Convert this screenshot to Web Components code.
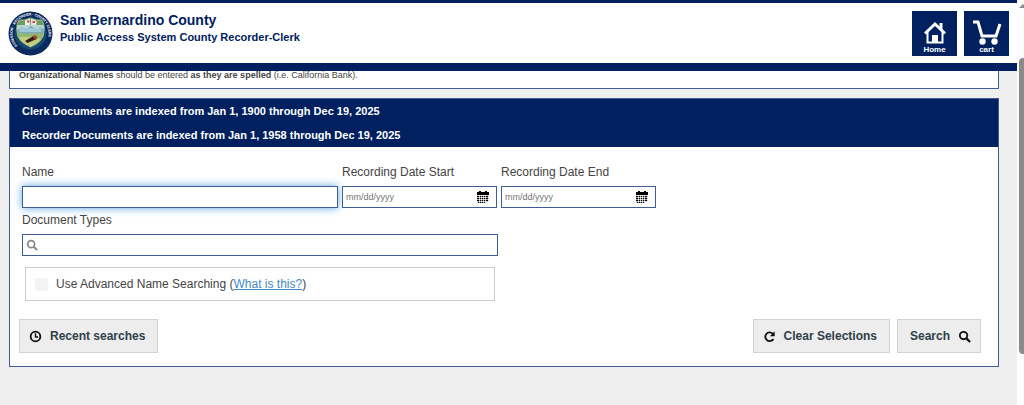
<!DOCTYPE html>
<html lang="en">
<head>
<meta charset="utf-8">
<meta name="viewport" content="width=device-width, initial-scale=1">
<title>San Bernardino County Recorder-Clerk</title>
<style>
  :root {
    --navy: #002060;
    --line: #405c97;
    --grey: #efefef;
    --text: #444;
  }
  body {
    margin: 0;
    font-family: "Liberation Sans", Arial, sans-serif;
    font-size: 12px;
    color: var(--text);
    background: var(--grey);
  }
</style>
</head>
<body>
<record-app></record-app>

<script type="module">
  // Shared helper: open shadow root filled with the element's markup.
  class BaseElement extends HTMLElement {
    constructor() {
      super();
      this.attachShadow({ mode: 'open' });
    }
    connectedCallback() {
      this.shadowRoot.innerHTML = this.render();
    }
  }

  const magnifier = `<circle cx="6" cy="6" r="4" fill="none" stroke="currentColor" stroke-width="2"/>
    <path d="M9 9l4 4" stroke="currentColor" stroke-width="2.4"/>`;

  const icons = {
    clock: `<circle cx="7" cy="7" r="5.2" fill="none" stroke="currentColor" stroke-width="2"/>
      <path d="M7 3.5V7.5H9.8" fill="none" stroke="currentColor" stroke-width="1.5"/>`,
    refresh: `<path d="M11.2 9.6A4.7 4.7 0 1 1 10.6 4" fill="none" stroke="currentColor" stroke-width="2"/>
      <path d="M12.6 1.4V6.6H7.4Z" fill="currentColor"/>`,
    search: magnifier
  };

  class CountySeal extends BaseElement {
    render() {
      return `
        <style>
          :host { display: block; flex: none; }
          svg { display: block; width: 45px; height: 45px; }
          text { font-size: 7px; font-weight: bold; fill: #fff; }
        </style>
        <svg viewBox="0 0 90 90" role="img" aria-label="County seal">
          <defs>
            <path id="ring" d="M19 70A36 36 0 1 1 71 70"/>
            <clipPath id="shield"><path d="M23 18Q34 20 45 14Q56 20 67 18Q74 25 72 42Q71 61 45 72Q19 61 18 42Q16 25 23 18Z"/></clipPath>
          </defs>
          <circle cx="45" cy="45" r="44" fill="#0b2a60"/>
          <circle cx="45" cy="45" r="32" fill="#164a72"/>
          <g clip-path="url(#shield)">
            <rect x="15" y="12" width="60" height="62" fill="#b9d7d2"/>
            <rect x="15" y="12" width="60" height="16" fill="#6d9c62"/>
            <rect x="34" y="16" width="10" height="12" fill="#f4eeee"/>
            <rect x="46" y="16" width="11" height="12" fill="#eddede"/>
            <path d="M38 19h5v4h-5zM49 20h5v4h-5z" fill="#b9544c"/>
            <path d="M15 41L27 32L35 37L46 30L56 37L65 32L76 42V48H15Z" fill="#7fa7b6"/>
            <path d="M23 34H67V42H23Z" fill="#9dc8d8"/>
            <path d="M15 45H75V58H15Z" fill="#8fb870"/>
            <path d="M15 54Q34 47 75 58V75H15Z" fill="#c2cf81"/>
            <path d="M34 60L51 50L57 56L39 64Z" fill="#321d18"/>
            <path d="M49 50L56 48L59 55L55 58Z" fill="#a34231"/>
          </g>
          <path d="M23 18Q34 20 45 14Q56 20 67 18Q74 25 72 42Q71 61 45 72Q19 61 18 42Q16 25 23 18Z" fill="none" stroke="#9bbd72" stroke-width="2"/>
          <text><textPath href="#ring">ASSESSOR · RECORDER · COUNTY CLERK</textPath></text>
        </svg>
      `;
    }
  }

  class NavTile extends BaseElement {
    render() {
      return `
        <style>
          :host { display: block; }
          a {
            display: flex;
            flex-direction: column;
            align-items: center;
            justify-content: flex-end;
            box-sizing: border-box;
            width: 45px;
            height: 45px;
            padding-bottom: 1px;
            background: var(--navy);
            color: #fff;
            font-size: 8px;
            font-weight: bold;
            line-height: 10px;
            text-decoration: none;
          }
        </style>
        <a href="#"><slot name="icon"></slot><span><slot></slot></span></a>
      `;
    }
  }

  class SiteHeader extends BaseElement {
    render() {
      return `
        <style>
          :host { display: block; position: relative; z-index: 1; }
          header {
            display: flex;
            align-items: center;
            gap: 7px;
            box-sizing: border-box;
            min-height: 71px;
            padding: 0 8px;
            border-top: 3px solid var(--navy);
            border-bottom: 8px solid var(--navy);
            background: #fff;
            color: var(--navy);
          }
          .titles { flex: 1; padding-bottom: 10px; }
          h1, p { margin: 0; font-weight: bold; }
          h1 { font-size: 14px; line-height: 18px; }
          p { font-size: 11px; line-height: 16px; }
          svg { display: block; }
        </style>
        <header>
          <county-seal></county-seal>
          <div class="titles">
            <h1>San Bernardino County</h1>
            <p>Public Access System County Recorder-Clerk</p>
          </div>
          <nav-tile>
            <svg slot="icon" width="24" height="24" viewBox="0 0 24 24" fill="none" stroke="#fff" stroke-width="2">
              <path d="M2 12.5L12 3L22 12.5" stroke-width="3"/>
              <path d="M4.5 11V21.5H19.5V11"/>
              <path d="M16.5 2H19.5V9L16.5 6Z" fill="#fff" stroke="none"/>
              <path d="M9 22V14H15V22Z" fill="#fff" stroke="none"/>
            </svg>
            Home
          </nav-tile>
          <nav-tile>
            <svg slot="icon" width="30" height="26" viewBox="0 0 30 26" fill="none" stroke="#fff" stroke-width="3">
              <path d="M1 3H6L10 17H24L28 5"/>
              <circle cx="10.5" cy="22.5" r="3.2" fill="#fff" stroke="none"/>
              <circle cx="22.5" cy="22.5" r="3.2" fill="#fff" stroke="none"/>
            </svg>
            cart
          </nav-tile>
        </header>
      `;
    }
  }

  // Help text; its top edge is scrolled under the header.
  class NoticeBox extends BaseElement {
    render() {
      return `
        <style>
          :host {
            display: block;
            margin: -8px 18px 9px 9px;
            padding: 5px 9px 7px;
            border: 1px solid var(--line);
            background: #fff;
            font-size: 9px;
            line-height: 12px;
          }
        </style>
        <slot></slot>
      `;
    }
  }

  class TextField extends BaseElement {
    render() {
      const icon = this.getAttribute('icon');
      return `
        <style>
          :host { display: block; }
          label { display: block; line-height: 16px; margin-bottom: 6px; }
          .box {
            display: flex;
            align-items: center;
            box-sizing: border-box;
            height: 22px;
            padding: 0 3px;
            border: 1px solid var(--line);
            background: #fff;
          }
          :host([active]) .box { box-shadow: 0 0 8px #5ba5e3; }
          input {
            flex: 1;
            min-width: 0;
            padding: 0;
            border: 0;
            outline: 0;
            background: none;
            font: inherit;
            font-size: 9px;
          }
          input::placeholder { color: #757575; }
          svg { display: block; color: #888; }
          button { padding: 0 4px; border: 0; background: none; }
          button svg { color: #000; }
        </style>
        <label for="field">${this.getAttribute('label')}</label>
        <div class="box">
          ${icon === 'search' ? `<svg width="12" height="12" viewBox="0 0 14 14">${magnifier}</svg>` : ''}
          <input id="field" type="text" placeholder="${this.getAttribute('placeholder') || ''}">
          ${icon === 'calendar' ? `<button type="button" aria-label="Choose date">
            <svg width="12" height="12" viewBox="0 0 12 12" fill="currentColor">
              <path d="M0 1H2V0H4V1H8V0H10V1H12V4H0Z"/>
              <path d="M3 5h1v1H3zM5 5h1v1H5zM7 5h1v1H7zM9 5h2v1H9zM0 5h2v1H0zM0 7h2v1H0zM3 7h1v1H3zM5 7h1v1H5zM7 7h1v1H7zM9 7h2v1H9zM0 9h2v1H0zM3 9h1v1H3zM5 9h1v1H5zM7 9h1v1H7zM9 9h2v1H9zM1 11h1v1H1zM3 11h1v1H3zM5 11h1v1H5zM7 11h1v1H7z" stroke="currentColor" stroke-width=".4"/>
            </svg></button>` : ''}
        </div>
      `;
    }
  }

  class AdvancedOption extends BaseElement {
    render() {
      return `
        <style>
          :host {
            display: flex;
            align-items: center;
            gap: 8px;
            box-sizing: border-box;
            height: 34px;
            padding: 0 9px;
            border: 1px solid #ccc;
          }
          input {
            appearance: none;
            width: 13px;
            height: 13px;
            margin: 0;
            border-radius: 2px;
            background: #f3f3f3;
          }
          input:checked { background: var(--navy); }
          a { color: #428bca; }
        </style>
        <input id="advanced" type="checkbox">
        <span><label for="advanced">Use Advanced Name Searching</label> (<a href="#">What is this?</a>)</span>
      `;
    }
  }

  class ActionButton extends BaseElement {
    render() {
      return `
        <style>
          :host { display: block; }
          button {
            display: flex;
            align-items: center;
            gap: 8px;
            height: 34px;
            padding: 0 12px 0 9px;
            border: 1px solid #d3d3d3;
            background: #ededed;
            color: #2f3f48;
            font: inherit;
            font-weight: bold;
          }
          :host([trailing]) button {
            flex-direction: row-reverse;
            padding: 0 9px 0 12px;
          }
          svg { display: block; color: #111; }
        </style>
        <button type="button">
          <svg width="13" height="13" viewBox="0 0 14 14">${icons[this.getAttribute('icon')]}</svg>
          <span><slot></slot></span>
        </button>
      `;
    }
  }

  class SearchPanel extends BaseElement {
    render() {
      return `
        <style>
          :host {
            display: block;
            margin: 0 18px 0 9px;
            border: 1px solid var(--line);
            background: #fff;
          }
          .dates {
            padding: 0 12px;
            background: var(--navy);
            color: #fff;
            font-size: 11px;
            font-weight: bold;
            line-height: 24px;
          }
          .dates p { margin: 0; }
          .fields { padding: 17px 12px 0; }
          .row {
            display: grid;
            grid-template-columns: 316fr 155fr 155fr;
            gap: 4px;
            max-width: 634px;
            margin-bottom: 4px;
          }
          .types { max-width: 476px; }
          advanced-option { max-width: 470px; margin: 11px 3px 0; }
          .actions {
            display: flex;
            gap: 7px;
            padding: 18px 17px 13px 9px;
          }
          .actions :first-child { margin-right: auto; }
        </style>
        <div class="dates">
          <p>Clerk Documents are indexed from Jan 1, 1900 through Dec 19, 2025</p>
          <p>Recorder Documents are indexed from Jan 1, 1958 through Dec 19, 2025</p>
        </div>
        <div class="fields">
          <div class="row">
            <text-field label="Name" active></text-field>
            <text-field label="Recording Date Start" placeholder="mm/dd/yyyy" icon="calendar"></text-field>
            <text-field label="Recording Date End" placeholder="mm/dd/yyyy" icon="calendar"></text-field>
          </div>
          <text-field class="types" label="Document Types" icon="search"></text-field>
          <advanced-option></advanced-option>
        </div>
        <div class="actions">
          <action-button icon="clock">Recent searches</action-button>
          <action-button icon="refresh">Clear Selections</action-button>
          <action-button icon="search" trailing>Search</action-button>
        </div>
      `;
    }
  }

  class ScrollTrack extends BaseElement {
    render() {
      return `
        <style>
          :host { display: flex; flex-direction: column; background: #fcfcfc; overflow: hidden; }
          svg { display: block; margin: 4px 0 0 2px; flex: none; }
          .thumb {
            width: 10px;
            height: 73%;
            margin: 50px 0 0 2px;
            border-radius: 4px;
            background: #8b8b8b;
          }
        </style>
        <svg width="8" height="4" viewBox="0 0 8 4"><path d="M0 4L4 0L8 4Z" fill="#8b8b8b"/></svg>
        <div class="thumb"></div>
      `;
    }
  }

  class RecordApp extends BaseElement {
    render() {
      return `
        <style>
          :host { display: flex; height: 100vh; overflow: hidden; }
          main { flex: 1; min-width: 0; }
          scroll-track { width: 7px; }
        </style>
        <main>
          <site-header></site-header>
          <notice-box><b>Organizational Names</b> should be entered <b>as they are spelled</b> (i.e. California Bank).</notice-box>
          <search-panel></search-panel>
        </main>
        <scroll-track></scroll-track>
      `;
    }
  }

  customElements.define('county-seal', CountySeal);
  customElements.define('nav-tile', NavTile);
  customElements.define('site-header', SiteHeader);
  customElements.define('notice-box', NoticeBox);
  customElements.define('text-field', TextField);
  customElements.define('advanced-option', AdvancedOption);
  customElements.define('action-button', ActionButton);
  customElements.define('search-panel', SearchPanel);
  customElements.define('scroll-track', ScrollTrack);
  customElements.define('record-app', RecordApp);
</script>
</body>
</html>
